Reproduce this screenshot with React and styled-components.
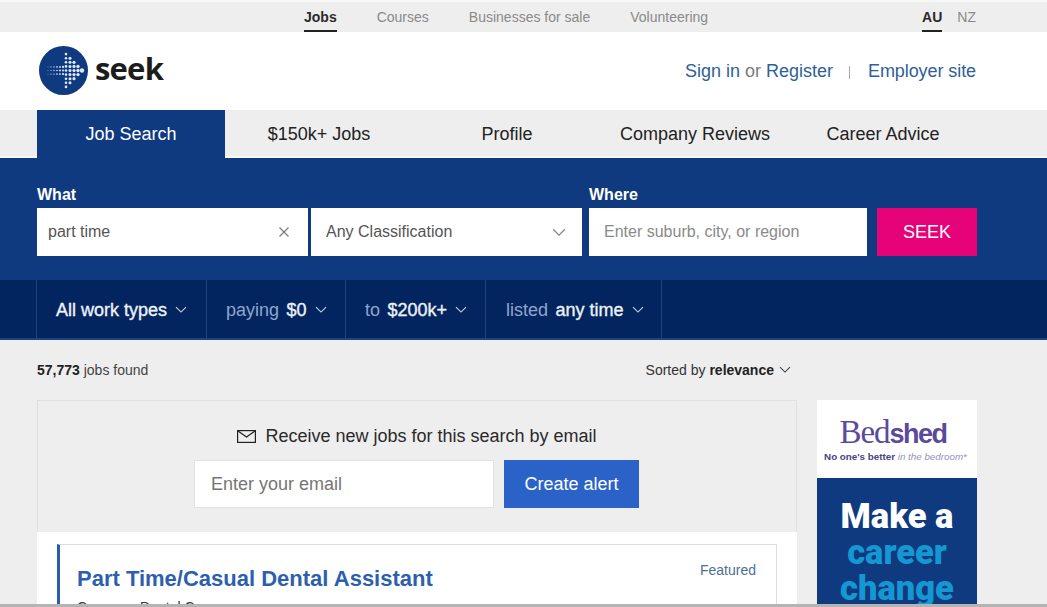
import React from 'react';
import styled, { createGlobalStyle } from 'styled-components';

const GlobalStyle = createGlobalStyle`
  html, body {
    margin: 0;
    padding: 0;
    height: 607px;
    overflow: hidden;
    background: #eee;
    font-family: "Liberation Sans", Arial, sans-serif;
  }
`

const Page = styled.div`
  position: relative;
  width: 1047px;
  height: 607px;
  overflow: hidden;
  background: #eeeeee;
`

const TopBar = styled.div`
  height: 30px;
  background: #eeeeee;
  border-top: 2px solid #f8f8f8;
  display: flex;
  padding-left: 304px;
  padding-right: 71px;
  font-size: 14px;
`

const TopLinks = styled.div`
  display: flex;
  gap: 40px;
  flex: 1;
`

const TopLangs = styled.div`
  display: flex;
  gap: 15px;
`

const TopLink = styled.a`
  height: 30px;
  line-height: 30px;
  box-sizing: border-box;
  color: ${p => p.$active ? '#2b2b2b' : '#8a8a8a'};
  font-weight: ${p => p.$active ? 'bold' : 'normal'};
  border-bottom: 2px solid ${p => p.$active ? '#222' : 'transparent'};
`

const Header = styled.div`
  height: 78px;
  background: #fff;
  display: flex;
  align-items: center;
  justify-content: space-between;
  padding: 0 71px 0 39px;
`

const Logo = styled.div`
  display: flex;
  align-items: center;
  gap: 7px;
  margin-top: -1px;
`

const LogoWord = styled.span`
  font-family: "Open Sans", sans-serif;
  font-weight: 700;
  font-size: 31px;
  letter-spacing: -0.8px;
  color: #1c1c1c;
  line-height: 50px;
  margin-top: -5px;
`

const HeaderLinks = styled.div`
  display: flex;
  align-items: center;
  font-size: 18px;
  color: #7a7a7a;
  margin-top: 1px;
`

const HeaderLink = styled.a`
  color: #2f6098;
  letter-spacing: ${p => p.$tight ? '-0.08px' : '0'};
`

const Pipe = styled.span`
  width: 1px;
  height: 13px;
  background: #a9a9a9;
  margin: 2px 18px 0 16px;
`

const Nav = styled.div`
  height: 48px;
  background: #eeeeee;
  display: flex;
  padding-left: 37px;
  box-sizing: border-box;
  border-bottom: 2px solid #f6f8fb;
`

const NavTab = styled.a`
  width: 188px;
  height: ${p => p.$active ? '48px' : '46px'};
  line-height: 48px;
  text-align: center;
  font-size: 18px;
  color: ${p => p.$active ? '#fff' : '#222'};
  background: ${p => p.$active ? '#0f3a80' : 'transparent'};
`

const SearchPanel = styled.div`
  height: 122px;
  box-sizing: border-box;
  background: #0f3a80;
  padding: 27px 70px 0 37px;
  display: flex;
`

const Field = styled.div`
  display: flex;
  flex-direction: column;
  width: ${p => p.$width}px;
  margin-right: ${p => p.$gap}px;
`

const FieldLabel = styled.label`
  height: 23px;
  line-height: 20px;
  font-size: 16px;
  font-weight: bold;
  color: #fff;
`

const FieldInner = styled.div`
  height: 48px;
  background: #fff;
  display: flex;
  align-items: center;
  justify-content: space-between;
  box-sizing: border-box;
  padding: ${p => p.$pad};
  font-size: 16px;
  color: ${p => p.$muted ? '#8a8a8a' : '#555'};
`

const SeekButton = styled.button`
  width: 100px;
  height: 48px;
  margin-top: 23px;
  border: 0;
  background: #e60278;
  color: #fff;
  font-family: inherit;
  font-size: 18px;
  padding: 0;
`

const FilterBar = styled.div`
  height: 60px;
  box-sizing: border-box;
  background: #03255f;
  border-bottom: 2px solid #1d4585;
  display: flex;
  padding-left: 36px;
`

const FilterItem = styled.div`
  display: flex;
  align-items: center;
  gap: 8px;
  box-sizing: border-box;
  width: ${p => p.$width}px;
  padding: 2px 0 0 ${p => p.$pad}px;
  border-left: 1px solid #1f437f;
  border-right: ${p => p.$last ? '1px solid #1f437f' : '0'};
  font-size: 18px;
  color: #eef2f8;
  -webkit-text-stroke: 0.35px #eef2f8;
  white-space: nowrap;
`

const FilterMuted = styled.span`
  font-weight: normal;
  color: #8ea6cc;
  -webkit-text-stroke: 0;
  margin-right: 2.5px;
`

const Content = styled.div`
  padding-left: 37px;
  width: 940px;
`

const ResultRow = styled.div`
  height: 60px;
  width: 760px;
  display: flex;
  align-items: center;
  justify-content: space-between;
  font-size: 14px;
  color: #444;
`

const Strong = styled.b`
  color: #222;
`

const SortBy = styled.div`
  display: flex;
  align-items: center;
  gap: 5px;
  padding-right: 6px;
  color: #333;
`

const Columns = styled.div`
  display: flex;
  gap: 20px;
`

const MainColumn = styled.div`
  width: 760px;
`

const AlertBox = styled.div`
  height: 132px;
  box-sizing: border-box;
  border: 1px solid #e0e0e0;
  border-bottom: 0;
  display: flex;
  flex-direction: column;
  align-items: center;
  padding-top: 25px;
`

const AlertTitle = styled.div`
  display: flex;
  align-items: center;
  gap: 9px;
  height: 20px;
  font-size: 18px;
  color: #2a2a2a;
`

const AlertForm = styled.div`
  display: flex;
  gap: 10px;
  margin-top: 14px;
  margin-left: -1px;
`

const EmailInput = styled.div`
  width: 300px;
  height: 48px;
  box-sizing: border-box;
  background: #fff;
  border: 1px solid #e2e2e2;
  padding-left: 16px;
  line-height: 46px;
  font-size: 18px;
  color: #757575;
`

const AlertButton = styled.button`
  width: 135px;
  height: 48px;
  border: 0;
  padding: 0;
  background: #2a62c8;
  color: #fff;
  font-family: inherit;
  font-size: 18px;
`

const Results = styled.div`
  background: #fff;
  padding: 12px 20px 0;
  height: 80px;
`

const JobCard = styled.div`
  position: relative;
  width: 720px;
  height: 100px;
  box-sizing: border-box;
  border: 1px solid #dcdcdc;
  border-left: 3px solid #2a5ca8;
  padding: 20px 0 0 17px;
`

const JobTitle = styled.a`
  display: block;
  font-size: 22px;
  line-height: 28px;
  font-weight: bold;
  color: #2d5fae;
`

const Company = styled.div`
  font-size: 14px;
  line-height: 18px;
  margin-top: 5px;
  color: #333;
`

const Featured = styled.span`
  position: absolute;
  top: 17px;
  right: 20px;
  font-size: 14px;
  color: #4d7096;
`

const AdColumn = styled.div`
  width: 160px;
`

const AdBrand = styled.div`
  height: 78px;
  background: #fff;
  display: flex;
  flex-direction: column;
  align-items: center;
  padding-top: 16px;
  box-sizing: border-box;
`

const BrandName = styled.div`
  font-family: "Liberation Serif", serif;
  font-size: 33px;
  line-height: 33px;
  letter-spacing: -1px;
  color: #5b4a9c;
  margin-right: 8px;
`

const BrandBold = styled.span`
  font-family: "Liberation Sans", sans-serif;
  font-weight: bold;
  font-size: 27px;
  letter-spacing: -1.5px;
`

const BrandLine = styled.div`
  font-size: 9.8px;
  line-height: 12px;
  color: #998fbb;
  font-style: italic;
  white-space: nowrap;
  margin-right: 3px;
`

const BrandStrong = styled.span`
  font-style: normal;
  font-weight: bold;
  color: #4a4285;
`

const AdBanner = styled.div`
  height: 130px;
  background: #0f3a80;
  text-align: center;
  padding-top: 20px;
  box-sizing: border-box;
  font-family: Roboto, sans-serif;
  font-weight: 900;
  font-size: 34.5px;
  line-height: 36px;
`

const AdLine = styled.div`
  color: ${p => p.$accent ? '#1597d2' : '#fff'};
`

const BottomEdge = styled.div`
  position: absolute;
  left: 0;
  right: 0;
  bottom: 0;
  height: 3px;
  background: #b4b4b4;
`

const Chevron = ({ size = 12, color = '#c8d4e6' }) => (
    <svg width={size} height={size * 0.6} viewBox="0 0 12 7" fill="none">
        <path d="M1 1l5 5 5-5" stroke={color} strokeWidth="1.1" />
    </svg>
)

const LogoMark = () => {
    // shaft of small dots, then the head of the arrow with bigger ones
    const dots = []
    for (let x = 9; x < 25; x += 3) {
        for (let row = -1; row <= 1; row++) {
            dots.push(<circle key={'s' + x + row} cx={x} cy={24.5 + row * 3.6} r={0.45 + (x - 9) * 0.04} fill="#dfe9f6" />)
        }
    }
    const head = [
        { x: 27, n: 9, r: 1.3 }, { x: 31, n: 7, r: 1.5 }, { x: 35, n: 5, r: 1.6 },
        { x: 39, n: 3, r: 1.7 }, { x: 43, n: 1, r: 2.2 },
    ]
    head.forEach(c => {
        for (let i = 0; i < c.n; i++) {
            const y = 24.5 + (i - (c.n - 1) / 2) * 4.1
            dots.push(<circle key={c.x + '-' + i} cx={c.x} cy={y} r={c.r} fill="#dfe9f6" />)
        }
    })
    return (
        <svg width="49" height="49" viewBox="0 0 49 49">
            <circle cx="24.5" cy="24.5" r="24.5" fill="#0f3a80" />
            {dots}
        </svg>
    )
}

const App = () => (
    <Page>
        <GlobalStyle />
        <TopBar>
            <TopLinks>
                <TopLink $active>Jobs</TopLink>
                <TopLink>Courses</TopLink>
                <TopLink>Businesses for sale</TopLink>
                <TopLink>Volunteering</TopLink>
            </TopLinks>
            <TopLangs>
                <TopLink $active>AU</TopLink>
                <TopLink>NZ</TopLink>
            </TopLangs>
        </TopBar>
        <Header>
            <Logo>
                <LogoMark />
                <LogoWord>seek</LogoWord>
            </Logo>
            <HeaderLinks>
                <HeaderLink>Sign in</HeaderLink>&nbsp;or&nbsp;<HeaderLink>Register</HeaderLink>
                <Pipe />
                <HeaderLink $tight>Employer site</HeaderLink>
            </HeaderLinks>
        </Header>
        <Nav>
            <NavTab $active>Job Search</NavTab>
            <NavTab>$150k+ Jobs</NavTab>
            <NavTab>Profile</NavTab>
            <NavTab>Company Reviews</NavTab>
            <NavTab>Career Advice</NavTab>
        </Nav>
        <SearchPanel>
            <Field $width={271} $gap={3}>
                <FieldLabel>What</FieldLabel>
                <FieldInner $pad="0 18px 0 11px">
                    part time
                    <svg width="12" height="12" viewBox="0 0 12 12" fill="none">
                        <path d="M1.5 1.5l9 9M10.5 1.5l-9 9" stroke="#777" strokeWidth="1.1" />
                    </svg>
                </FieldInner>
            </Field>
            <Field $width={271} $gap={7}>
                <FieldLabel>&nbsp;</FieldLabel>
                <FieldInner $pad="0 16px 0 15px">
                    Any Classification
                    <Chevron size={14} color="#888" />
                </FieldInner>
            </Field>
            <Field $width={278} $gap={10}>
                <FieldLabel>Where</FieldLabel>
                <FieldInner $pad="0 0 0 15px" $muted>Enter suburb, city, or region</FieldInner>
            </Field>
            <SeekButton>SEEK</SeekButton>
        </SearchPanel>
        <FilterBar>
            <FilterItem $width={170} $pad={19}>
                All work types <Chevron />
            </FilterItem>
            <FilterItem $width={139} $pad={19}>
                <span><FilterMuted>paying</FilterMuted> $0</span> <Chevron />
            </FilterItem>
            <FilterItem $width={140} $pad={19}>
                <span><FilterMuted>to</FilterMuted> $200k+</span> <Chevron />
            </FilterItem>
            <FilterItem $width={177} $pad={20} $last>
                <span><FilterMuted>listed</FilterMuted> any time</span> <Chevron />
            </FilterItem>
        </FilterBar>
        <Content>
            <ResultRow>
                <span><Strong>57,773</Strong> jobs found</span>
                <SortBy>
                    <span>Sorted by <Strong>relevance</Strong></span>
                    <Chevron color="#444" />
                </SortBy>
            </ResultRow>
            <Columns>
                <MainColumn>
                    <AlertBox>
                        <AlertTitle>
                            <svg width="19" height="13" viewBox="0 0 19 13" fill="none">
                                <rect x="0.6" y="0.6" width="17.8" height="11.8" stroke="#222" strokeWidth="1.2" />
                                <path d="M1 1l8.5 6L18 1" stroke="#222" strokeWidth="1.2" />
                            </svg>
                            Receive new jobs for this search by email
                        </AlertTitle>
                        <AlertForm>
                            <EmailInput>Enter your email</EmailInput>
                            <AlertButton>Create alert</AlertButton>
                        </AlertForm>
                    </AlertBox>
                    <Results>
                        <JobCard>
                            <JobTitle>Part Time/Casual Dental Assistant</JobTitle>
                            <Company>Compass Dental Care</Company>
                            <Featured>Featured</Featured>
                        </JobCard>
                    </Results>
                </MainColumn>
                <AdColumn>
                    <AdBrand>
                        <BrandName>Bed<BrandBold>shed</BrandBold></BrandName>
                        <BrandLine><BrandStrong>No one's better</BrandStrong> in the bedroom*</BrandLine>
                    </AdBrand>
                    <AdBanner>
                        <AdLine>Make a</AdLine>
                        <AdLine $accent>career</AdLine>
                        <AdLine $accent>change</AdLine>
                    </AdBanner>
                </AdColumn>
            </Columns>
        </Content>
        <BottomEdge />
    </Page>
)

export default App
